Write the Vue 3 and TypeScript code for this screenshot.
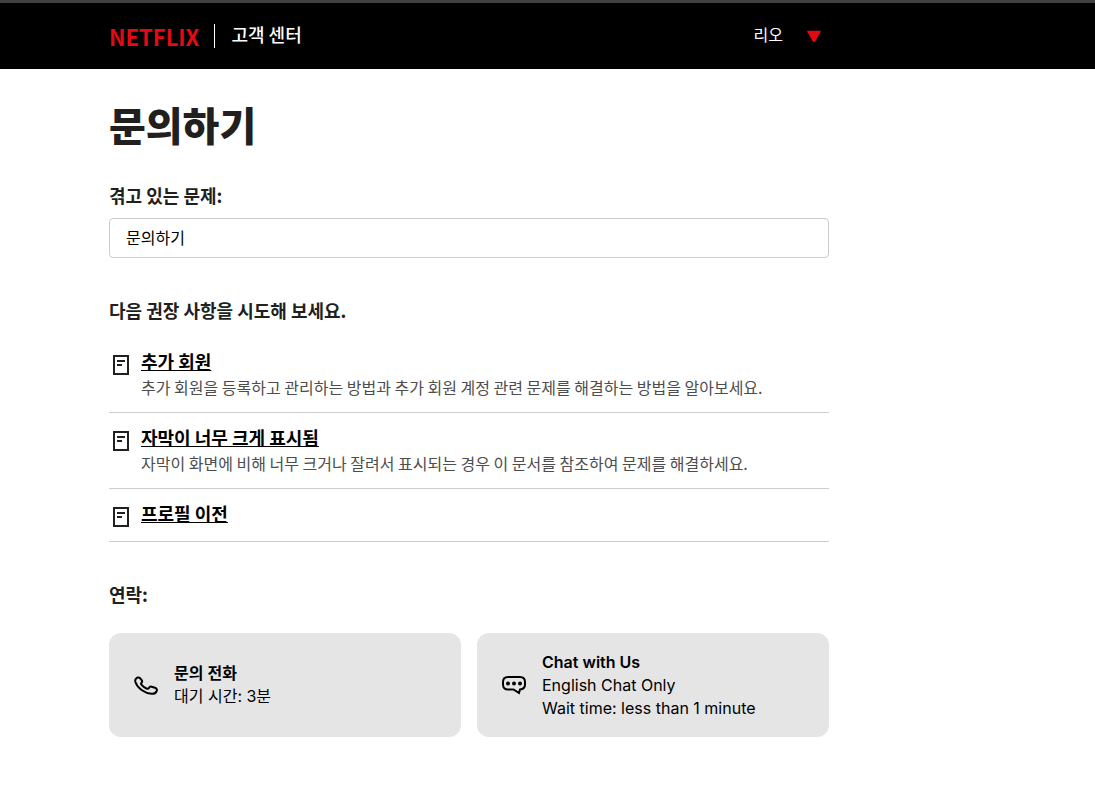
<script setup lang="ts">
import { ref } from 'vue'

interface Suggestion {
  title: string
  description?: string
}

const problem = ref('문의하기')

const suggestions: Suggestion[] = [
  {
    title: '추가 회원',
    description: '추가 회원을 등록하고 관리하는 방법과 추가 회원 계정 관련 문제를 해결하는 방법을 알아보세요.',
  },
  {
    title: '자막이 너무 크게 표시됨',
    description: '자막이 화면에 비해 너무 크거나 잘려서 표시되는 경우 이 문서를 참조하여 문제를 해결하세요.',
  },
  { title: '프로필 이전' },
]
</script>

<template>
  <header class="header">
    <div class="column header-row">
      <a class="logo" href="#">NETFLIX</a>
      <a class="center-link" href="#">고객 센터</a>
      <button class="account" type="button">
        <span class="account-name">리오</span>
        <svg width="14" height="12" viewBox="0 0 14 12" aria-hidden="true">
          <path d="M1 1.500H13L8 10.500Q7 12 6 10.500Z" fill="#e50914" stroke="#e50914" stroke-width="1.500" stroke-linejoin="round" />
        </svg>
      </button>
    </div>
  </header>

  <main class="main">
    <div class="column">
      <h1 class="title">문의하기</h1>

      <label class="heading" for="problem">겪고 있는 문제:</label>
      <input id="problem" v-model="problem" class="field" type="text" />

      <h2 class="heading section-heading">다음 권장 사항을 시도해 보세요.</h2>
      <ul class="tips">
        <li v-for="item in suggestions" :key="item.title" class="tip">
          <svg class="tip-icon" width="24" height="24" viewBox="0 0 24 24" fill="none" stroke="#221f1f" stroke-width="2" aria-hidden="true">
            <path d="M5 3H19V21H5ZM8 8H16M8 12H13" />
          </svg>
          <div>
            <a class="tip-link" href="#">{{ item.title }}</a>
            <p v-if="item.description" class="tip-text">{{ item.description }}</p>
          </div>
        </li>
      </ul>

      <h2 class="heading section-heading">연락:</h2>
      <div class="cards">
        <button class="card" type="button">
          <svg width="24" height="24" viewBox="0 0 24 24" fill="none" stroke="#000" stroke-width="2" stroke-linejoin="round" aria-hidden="true">
            <path d="M2 5.700C2.900 4.300 4.800 3.900 6 5.100L7.700 7.200C8.400 8.100 8.200 9 7.500 9.700C6.900 10.400 7 11.100 7.600 11.800C9 13.500 11 14.900 13 15.700C13.900 16 14.500 15.800 14.900 15C15.400 14 16.400 13.400 17.500 13.700L21 14.700C22.700 15.200 23.400 16.700 22.600 18.200C21.700 20.100 19.800 21 17.500 20.800C10.500 20.200 3.500 15.200 1.400 9C1 7.700 1.200 6.700 2 5.700Z" />
          </svg>
          <span class="card-text">
            <strong>문의 전화</strong>
            <span>대기 시간: 3분</span>
          </span>
        </button>
        <button class="card" type="button">
          <svg width="24" height="24" viewBox="0 0 24 24" fill="none" stroke="#000" stroke-width="2" aria-hidden="true">
            <path d="M6 4H18C21.300 4 23 5.700 23 9V11.500C23 14.500 21.300 16.200 18 16.500L17 20L11.500 16.500H6C2.700 16.500 1 14.800 1 11.500V9C1 5.700 2.700 4 6 4Z" />
            <g fill="#000" stroke="none">
              <circle cx="6" cy="10.5" r="2" />
              <circle cx="12" cy="10.5" r="2" />
              <circle cx="18" cy="10.5" r="2" />
            </g>
          </svg>
          <span class="card-text">
            <strong>Chat with Us</strong>
            <span>English Chat Only</span>
            <span>Wait time: less than 1 minute</span>
          </span>
        </button>
      </div>
    </div>
  </main>
</template>

<style>
body {
  margin: 0;
  background: #fff;
}
</style>

<style scoped>
.header,
.main {
  padding: 0 109px;
  font-family: "Noto Sans CJK KR", sans-serif;
  color: #221f1f;
}

.header {
  border-top: 3px solid #414141;
  background: #000;
}

.column {
  max-width: 720px;
}

.header-row {
  display: flex;
  align-items: center;
  height: 66px;
}

.logo {
  padding-right: 15px;
  border-right: 1px solid #fff;
  color: #e50914;
  font: 700 22px/24px "Noto Sans CJK KR", sans-serif;
  text-decoration: none;
}

.center-link {
  margin-left: 16px;
  padding-bottom: 4px;
  color: #fff;
  font-size: 18px;
  font-weight: 500;
  line-height: 24px;
  text-decoration: none;
}

.account {
  display: flex;
  align-items: center;
  gap: 24px;
  margin-left: auto;
  padding: 0 8px 0 0;
  border: 0;
  background: none;
  color: #fff;
  font: 16px/24px "Noto Sans CJK KR", sans-serif;
}

.account-name {
  padding-bottom: 4px;
}

.title {
  margin: 0;
  padding: 29px 0 33px;
  font-size: 40px;
  font-weight: 900;
  line-height: 52px;
}

.heading {
  display: block;
  margin: 0;
  font-size: 18px;
  font-weight: 700;
  line-height: 24px;
}

.field {
  display: block;
  box-sizing: border-box;
  width: 100%;
  height: 40px;
  margin-top: 11px;
  padding: 0 16px 2px;
  border: 1px solid #ccc;
  border-radius: 4px;
  background: #fff;
  color: #000;
  font: 16px/24px "Noto Sans CJK KR", sans-serif;
}

.section-heading {
  margin-top: 40px;
}

.tips {
  margin: 15px 0 0;
  padding: 0;
  list-style: none;
}

.tip {
  display: flex;
  gap: 8px;
  padding: 11px 0 12px;
  border-bottom: 1px solid #ccc;
}

.tip-icon {
  flex: none;
  margin-top: 5px;
}

.tip-link {
  display: block;
  width: fit-content;
  color: #000;
  font-size: 18px;
  font-weight: 700;
  line-height: 26px;
}

.tip-text {
  margin: 0;
  color: #4d4d4d;
  font-size: 16px;
  line-height: 26px;
}

.cards {
  display: grid;
  grid-template-columns: 1fr 1fr;
  gap: 16px;
  margin-top: 27px;
  padding-bottom: 48px;
}

.card {
  display: flex;
  align-items: center;
  gap: 16px;
  min-height: 104px;
  padding: 16px 25px;
  border: 0;
  border-radius: 12px;
  background: #e5e5e5;
  color: #000;
  font: 16px/23px Inter, "Noto Sans CJK KR", sans-serif;
  text-align: left;
}

.card strong {
  font-weight: 600;
}

.card svg {
  flex: none;
}

.card-text {
  display: flex;
  flex-direction: column;
}
</style>
